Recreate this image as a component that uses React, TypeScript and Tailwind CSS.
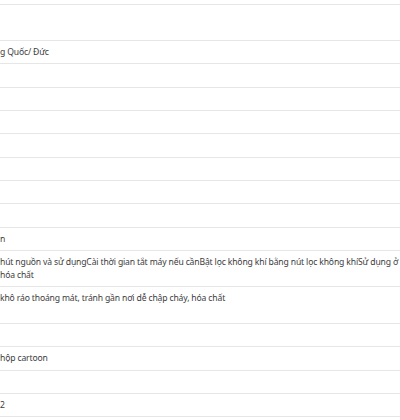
import React from "react";

type Row = { lines: string[]; h?: string };

const rows: Row[] = [
  { lines: [], h: "h-[36px]" },
  { lines: ["g Quốc/ Đức"] },
  { lines: [] },
  { lines: [] },
  { lines: [] },
  { lines: [] },
  { lines: [] },
  { lines: [] },
  { lines: [] },
  { lines: ["n"] },
  {
    lines: [
      "hút nguồn và sử dụngCài thời gian tắt máy nếu cầnBật lọc không khí bằng nút lọc không khíSử dụng ở nơi khô ráo thoáng mát, tránh gần nơi dễ chập cháy,",
      "hóa chất",
    ],
  },
  { lines: ["khô ráo thoáng mát, tránh gần nơi dễ chập cháy, hóa chất"], h: "h-[37px]" },
  { lines: [] },
  { lines: ["hộp cartoon"] },
  { lines: [] },
  { lines: ["2"] },
  { lines: [] },
];

const App = () => {
  return (
    <div className="w-[400px] h-[420px] overflow-hidden bg-white pt-[4px] font-['Noto_Sans',sans-serif] text-[8.6px] tracking-[-0.15px] text-[#3c3c3c]">
      {rows.map((row, i) => (
        <div
          key={i}
          className={`border-t border-[#e6e6e6] pt-[5px] pb-[4.5px] leading-[12.83px] whitespace-nowrap ${
            row.h ?? (row.lines.length ? "" : "h-[23.33px]")
          }`}
        >
          {row.lines.map((l, j) => (
            <div key={j}>{l}</div>
          ))}
        </div>
      ))}
    </div>
  );
};

export default App;
